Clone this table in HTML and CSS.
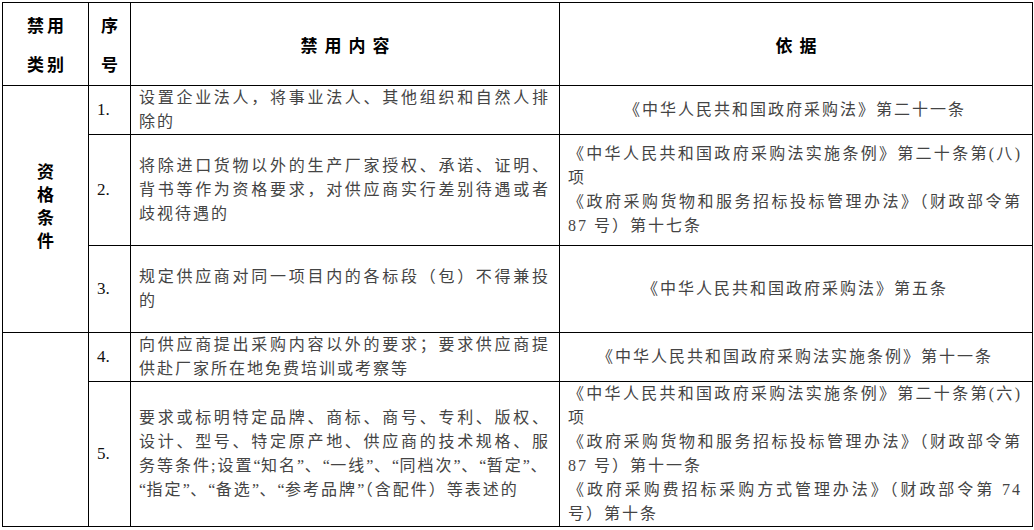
FILE: index.html
```html
<!DOCTYPE html>
<html lang="zh-CN">
<head>
<meta charset="utf-8">
<title>禁用内容</title>
<link rel="stylesheet" href="styles.css">
</head>
<body>
<table class="rules">
  <colgroup>
    <col class="c-cat">
    <col class="c-num">
    <col class="c-content">
    <col class="c-basis">
  </colgroup>
  <thead>
    <tr class="h-head">
      <th class="th-narrow">禁用<br>类别</th>
      <th class="th-narrow">序<br>号</th>
      <th class="th-wide">禁用内容</th>
      <th class="th-wide">依据</th>
    </tr>
  </thead>
  <tbody>
    <tr class="h-r1">
      <td class="cat" rowspan="3"><span class="cat-text">资格条件</span></td>
      <td class="num">1.</td>
      <td class="content">设置企业法人，将事业法人、其他组织和自然人排除的</td>
      <td class="basis center">《中华人民共和国政府采购法》第二十一条</td>
    </tr>
    <tr class="h-r2">
      <td class="num">2.</td>
      <td class="content">将除进口货物以外的生产厂家授权、承诺、证明、背书等作为资格要求，对供应商实行差别待遇或者歧视待遇的</td>
      <td class="basis">
        <div>《中华人民共和国政府采购法实施条例》第二十条第(八)项</div>
        <div>《政府采购货物和服务招标投标管理办法》（财政部令第87 号）第十七条</div>
      </td>
    </tr>
    <tr class="h-r3">
      <td class="num">3.</td>
      <td class="content">规定供应商对同一项目内的各标段（包）不得兼投的</td>
      <td class="basis center">《中华人民共和国政府采购法》第五条</td>
    </tr>
    <tr class="h-r4">
      <td class="cat" rowspan="2"></td>
      <td class="num">4.</td>
      <td class="content">向供应商提出采购内容以外的要求；要求供应商提供赴厂家所在地免费培训或考察等</td>
      <td class="basis center">《中华人民共和国政府采购法实施条例》第十一条</td>
    </tr>
    <tr class="h-r5">
      <td class="num">5.</td>
      <td class="content">要求或标明特定品牌、商标、商号、专利、版权、设计、型号、特定原产地、供应商的技术规格、服务等条件;设置<span class="q">“</span>知名<span class="q">”</span>、<span class="q">“</span>一线<span class="q">”</span>、<span class="q">“</span>同档次<span class="q">”</span>、<span class="q">“</span>暂定<span class="q">”</span>、<br><span class="q">“</span>指定<span class="q">”</span>、<span class="q">“</span>备选<span class="q">”</span>、<span class="q">“</span>参考品牌<span class="q">”</span>（含配件）等表述的</td>
      <td class="basis">
        <div>《中华人民共和国政府采购法实施条例》第二十条第(六)项</div>
        <div>《政府采购货物和服务招标投标管理办法》（财政部令第87 号）第十一条</div>
        <div>《政府采购费招标采购方式管理办法》（财政部令第 74 号）第十条</div>
      </td>
    </tr>
  </tbody>
</table>
</body>
</html>
```

FILE: styles.css
```css
html, body {
  margin: 0;
  padding: 0;
  background: #ffffff;
}

.rules {
  margin: 2px 0 0 2px;
  border-collapse: collapse;
  table-layout: fixed;
  width: 1030px;
  font-family: "Liberation Serif", "Noto Sans CJK SC", serif;
  font-size: 16px;
  color: #444444;
}

.c-cat { width: 86px; }
.c-num { width: 42px; }
.c-content { width: 429px; }
.c-basis { width: 473px; }

.rules th,
.rules td {
  border: 1px solid #000000;
  padding: 0;
  vertical-align: middle;
}

.h-head { height: 83px; }
.h-r1 { height: 49px; }
.h-r2 { height: 111px; }
.h-r3 { height: 87px; }
.h-r4 { height: 49px; }
.h-r5 { height: 145px; }

.rules th {
  font-family: "Noto Sans CJK SC", sans-serif;
  font-weight: 700;
  font-size: 17px;
  color: #000000;
  text-align: center;
  line-height: 39px;
}

.rules .th-narrow {
  letter-spacing: 3px;
  padding-left: 3px;
}

.rules .th-wide {
  letter-spacing: 7px;
  padding-left: 7px;
}

.rules .cat {
  font-family: "Noto Sans CJK SC", sans-serif;
  font-weight: 700;
  font-size: 17px;
  color: #000000;
  text-align: center;
  padding-bottom: 8px;
}

.cat-text {
  display: inline-block;
  width: 17px;
  line-height: 23px;
}

.rules .num {
  font-size: 17px;
  color: #111111;
  padding-left: 8px;
  text-align: left;
}

.rules .content {
  padding: 0 9px 0 8px;
  text-align: justify;
  line-height: 24px;
  letter-spacing: 2px;
}

.rules .basis {
  padding: 0 10px 0 8px;
  text-align: justify;
  line-height: 24px;
  letter-spacing: 2px;
}

.rules .basis.center {
  text-align: center;
}

.q {
  letter-spacing: 0.5px;
}
```
